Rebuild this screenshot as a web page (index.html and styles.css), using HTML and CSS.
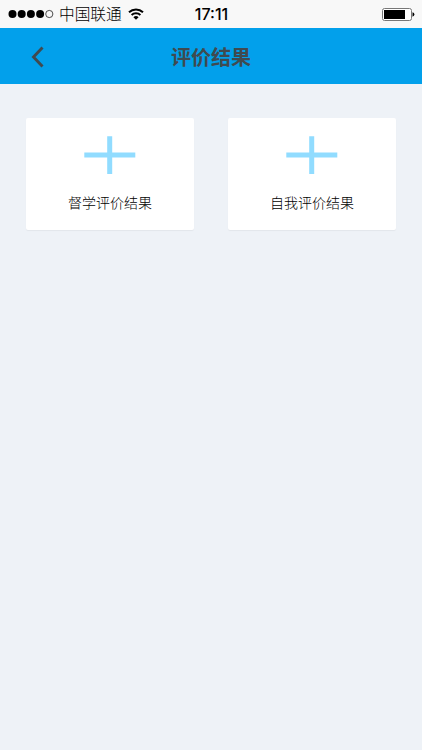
FILE: index.html
```
<!DOCTYPE html>
<html lang="zh-CN">
<head>
    <meta charset="UTF-8">
    <meta name="viewport" content="width=device-width, initial-scale=1.0">
    <title>评价结果</title>
    <link rel="stylesheet" href="styles.css">
</head>
<body>
    <div class="status-bar">
        <div class="status-left">
            <svg class="signal" width="46" height="10" viewBox="0 0 46 10">
                <circle cx="4.5" cy="5" r="4"/>
                <circle cx="13.7" cy="5" r="4"/>
                <circle cx="22.9" cy="5" r="4"/>
                <circle cx="32.1" cy="5" r="4"/>
                <circle cx="41.3" cy="5" r="3.6" fill="none" stroke="#222" stroke-width="0.8"/>
            </svg>
            <span class="carrier">中国联通</span>
            <svg class="wifi" width="16" height="12" viewBox="0 0 16 12">
                <path d="M1 4.2a10.2 10.2 0 0 1 14 0M3.6 7a6.4 6.4 0 0 1 8.8 0" fill="none" stroke="#000" stroke-width="2"/>
                <path d="M8 11.8L5.4 9.2a3.8 3.8 0 0 1 5.2 0z"/>
            </svg>
        </div>
        <span class="time">17:11</span>
        <svg class="battery" width="33" height="13" viewBox="0 0 33 13">
            <rect x="0.5" y="0.5" width="29" height="12" rx="2" fill="#fff" stroke="#777"/>
            <rect x="2" y="2" width="21" height="9"/>
            <path d="M30.5 4.3q1.9 0.6 1.9 2.2t-1.9 2.2z"/>
        </svg>
    </div>

    <header class="header">
        <a class="back" href="#" aria-label="返回">
            <svg width="14" height="22" viewBox="0 0 14 22">
                <path d="M11.5 1.5L2.5 11l9 9.5" fill="none" stroke="#404a50" stroke-width="2.9"/>
            </svg>
        </a>
        <h1 class="title">评价结果</h1>
    </header>

    <main class="card-list">
        <a class="card" href="#">
            <svg class="plus" width="52" height="38" viewBox="0 0 52 38">
                <path d="M0.3 19h51M25.7 0.3v37.7"/>
            </svg>
            <span class="card-text">督学评价结果</span>
        </a>
        <a class="card" href="#">
            <svg class="plus" width="52" height="38" viewBox="0 0 52 38">
                <path d="M0.3 19h51M25.7 0.3v37.7"/>
            </svg>
            <span class="card-text">自我评价结果</span>
        </a>
    </main>
</body>
</html>
```

FILE: styles.css
```
* {
    margin: 0;
    padding: 0;
    box-sizing: border-box;
}

body {
    font-family: "Liberation Sans", "Noto Sans CJK SC", sans-serif;
    background: #eef2f7;
    min-height: 100vh;
}

a {
    color: inherit;
    text-decoration: none;
}

svg {
    display: block;
}

/* status bar */
.status-bar {
    display: grid;
    grid-template-columns: 1fr auto 1fr;
    align-items: center;
    height: 28px;
    padding: 0 7px 0 8px;
    background: #f8f8f8;
    color: #000;
}

.status-left {
    display: flex;
    align-items: center;
}

.carrier {
    margin: 0 6px 0 5px;
    padding-top: 2px;
    font-size: 15.7px;
    line-height: 26px;
    font-weight: 300;
}

.wifi {
    margin-top: -1px;
}

.time {
    padding-top: 1px;
    font-family: Inter, "Liberation Sans", sans-serif;
    font-size: 16px;
    font-weight: 500;
    line-height: 27px;
}

.battery {
    justify-self: end;
}

/* header */
.header {
    display: grid;
    grid-template-columns: 50px 1fr 50px;
    align-items: center;
    height: 56px;
    background: #02a0eb;
}

.back {
    padding: 2px 0 0 31px;
}

.title {
    padding-top: 5px;
    color: #404a50;
    font-size: 20px;
    font-weight: 700;
    line-height: 51px;
    text-align: center;
}

/* cards */
.card-list {
    display: grid;
    grid-template-columns: 1fr 1fr;
    gap: 34px;
    padding: 34px 26px;
}

.card {
    display: flex;
    flex-direction: column;
    align-items: center;
    height: 112px;
    padding-top: 18px;
    background: #fff;
    border-radius: 2px;
    box-shadow: 0 1px 1px rgba(0, 0, 0, 0.05);
}

.plus {
    fill: none;
    stroke: #91dcff;
    stroke-width: 5;
}

.card-text {
    margin-top: 19px;
    color: #000;
    font-size: 14px;
    font-weight: 300;
    line-height: 20px;
}
```
